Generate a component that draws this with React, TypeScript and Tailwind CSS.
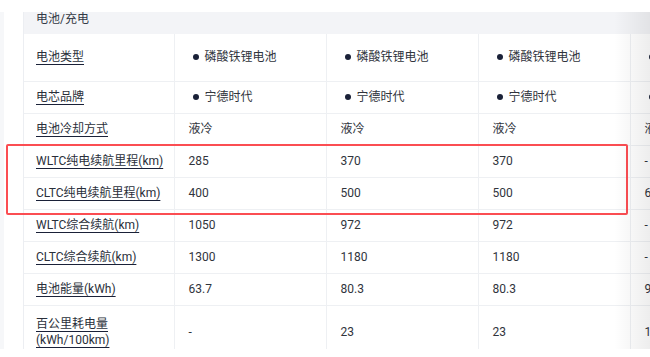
import React from "react";

type Cell = string | { dots: string };

interface SpecRow {
  label: string[];
  values: Cell[];
  h: string;
}

const ROWS: SpecRow[] = [
  {
    label: ["电池类型"],
    values: [{ dots: "磷酸铁锂电池" }, { dots: "磷酸铁锂电池" }, { dots: "磷酸铁锂电池" }, { dots: "磷酸铁锂电池" }],
    h: "h-[47px]",
  },
  {
    label: ["电芯品牌"],
    values: [{ dots: "宁德时代" }, { dots: "宁德时代" }, { dots: "宁德时代" }, { dots: "宁德时代" }],
    h: "h-[32px]",
  },
  { label: ["电池冷却方式"], values: ["液冷", "液冷", "液冷", "液冷"], h: "h-[32px]" },
  { label: ["WLTC纯电续航里程(km)"], values: ["285", "370", "370", "-"], h: "h-[32px]" },
  { label: ["CLTC纯电续航里程(km)"], values: ["400", "500", "500", "605"], h: "h-[32px]" },
  { label: ["WLTC综合续航(km)"], values: ["1050", "972", "972", "-"], h: "h-[32px]" },
  { label: ["CLTC综合续航(km)"], values: ["1300", "1180", "1180", "-"], h: "h-[32px]" },
  { label: ["电池能量(kWh)"], values: ["63.7", "80.3", "80.3", "90.0"], h: "h-[32px]" },
  { label: ["百公里耗电量", "(kWh/100km)"], values: ["-", "23", "23", "15"], h: "h-[53px]" },
];

function ValueCell({ cell }: { cell: Cell }) {
  if (typeof cell === "string") {
    return <span className="pl-[14px] whitespace-nowrap">{cell}</span>;
  }
  return (
    <span className="flex items-center whitespace-nowrap pl-[18px]">
      <span className="h-[6px] w-[6px] shrink-0 rounded-full bg-[#1a2138]" />
      <span className="ml-[6px]">{cell.dots}</span>
    </span>
  );
}

export default function App() {
  return (
    <div
      className="relative h-[357px] w-[650px] overflow-hidden bg-white text-[12px] text-[#2a2f3a]"
      style={{ fontFamily: 'Roboto, "Noto Sans CJK SC", sans-serif' }}
    >
      <div className="h-[12px]" />
      <div className="flex h-[337px] overflow-hidden">
        <div className="w-[4px] shrink-0 bg-[#f6f7f9]" />
        <div className="w-[19px] shrink-0" />
        <div className="shrink-0 border-l border-[#eceef2]">
          <table className="w-[758px] table-fixed border-collapse">
            <colgroup>
              <col className="w-[150px]" />
              <col className="w-[152px]" />
              <col className="w-[152px]" />
              <col className="w-[152px]" />
              <col className="w-[152px]" />
            </colgroup>
            <tbody>
              <tr className="h-[22px] bg-[#f3f4f7]">
                <td colSpan={5} className="p-0 align-top">
                  <div className="pl-[12px] leading-[14px] text-[#333a46]">电池/充电</div>
                </td>
              </tr>
              {ROWS.map((row) => (
                <tr key={row.label.join("")} className={`${row.h} border-b border-[#eef0f3]`}>
                  <td className="border-r border-[#eef0f3] p-0 pl-[12px] align-middle">
                    <div className="whitespace-nowrap leading-[16px]">
                      {row.label.map((l) => (
                        <div key={l}>
                          <span className="underline decoration-[#1a2138] underline-offset-[3px]">{l}</span>
                        </div>
                      ))}
                    </div>
                  </td>
                  {row.values.map((v, i) => (
                    <td key={i} className="border-r border-[#eef0f3] p-0 align-middle text-[#30343c]">
                      <ValueCell cell={v} />
                    </td>
                  ))}
                </tr>
              ))}
            </tbody>
          </table>
        </div>
      </div>

      {/* highlight box drawn over the two range rows */}
      <div className="pointer-events-none absolute left-[6px] top-[144px] h-[71px] w-[622px] rounded-[2px] border-[2.5px] border-[#fb4d52]" />

      {/* scroll fade on the right edge */}
      <div className="pointer-events-none absolute right-0 top-[12px] h-[337px] w-[36px] bg-gradient-to-r from-transparent to-[#00000012]" />
    </div>
  );
}
